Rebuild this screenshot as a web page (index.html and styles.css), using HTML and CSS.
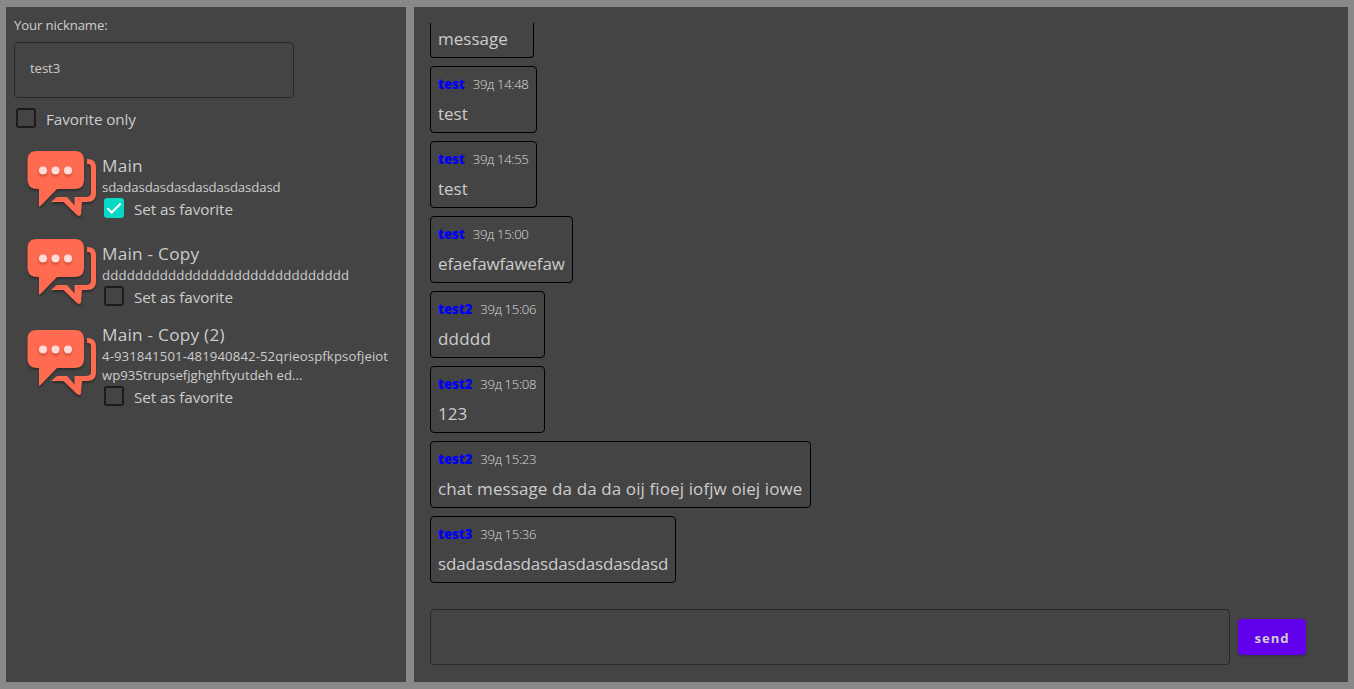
FILE: index.html
```html
<!DOCTYPE html>
<html lang="en">
<head>
<meta charset="utf-8">
<title>Chat</title>
<link rel="stylesheet" href="styles.css">
</head>
<body>
<svg class="defs" width="0" height="0">
  <symbol id="chat" viewBox="0 0 76 72">
    <path class="coral" d="M63 9c6 0 9 3 9 9v25c0 6-3 9-9 9h-5l-1 12c0 2-2 2.500-4 1L39.500 52H27l6-5h10l7.500 8.500V47H61c4.500 0 6-1 6-5V19c0-4-.5-5-4-5z"/>
    <path class="coral" d="M13.500 1h36.500c7 0 10 3 10 10v18c0 7-3 10-10 10H33L16.500 56c-1 1-1.500 1-1.500 0V39h-1C7 39 3.500 36 3.500 29V11c0-7 3-10 10-10z"/>
    <circle class="dot" cx="19" cy="20.500" r="4"/><circle class="dot" cx="31.500" cy="20.500" r="4"/><circle class="dot" cx="44" cy="20.500" r="4"/>
  </symbol>
</svg>
<main class="app">
  <aside class="sidebar">
    <div class="label">Your nickname:</div>
    <div class="nick">test3</div>
    <div class="check top"><span class="box"></span><span class="check-text">Favorite only</span></div>
    <div class="chats">
      <section class="chat">
        <svg class="icon"><use href="#chat"/></svg>
        <div class="info">
          <div class="title">Main</div>
          <div class="desc">sdadasdasdasdasdasdasdasd</div>
          <div class="check"><span class="box on"><svg width="20" height="20" viewBox="0 0 20 20"><path d="M3.500 10.300l4.200 4.200 9-9" fill="none" stroke="#fff" stroke-width="2.100"/></svg></span><span class="check-text">Set as favorite</span></div>
        </div>
      </section>
      <section class="chat">
        <svg class="icon"><use href="#chat"/></svg>
        <div class="info">
          <div class="title">Main - Copy</div>
          <div class="desc wide">dddddddddddddddddddddddddddddd</div>
          <div class="check"><span class="box"></span><span class="check-text">Set as favorite</span></div>
        </div>
      </section>
      <section class="chat tall">
        <svg class="icon"><use href="#chat"/></svg>
        <div class="info">
          <div class="title">Main - Copy (2)</div>
          <div class="desc"><span class="num">4-931841501-481940842-52qrieospfkpsofjeiot</span><br><span class="plain">wp935trupsefjghghftyutdeh ed...</span></div>
          <div class="check"><span class="box"></span><span class="check-text">Set as favorite</span></div>
        </div>
      </section>
    </div>
  </aside>
  <section class="room">
    <div class="messages">
      <article class="msg w104 scrolled"><p>message</p></article>
      <article class="msg w107"><header><b>test</b><time>39д 14:48</time></header><p>test</p></article>
      <article class="msg w107"><header><b>test</b><time>39д 14:55</time></header><p>test</p></article>
      <article class="msg w143"><header><b>test</b><time>39д 15:00</time></header><p>efaefawfawefaw</p></article>
      <article class="msg w115"><header><b>test2</b><time>39д 15:06</time></header><p class="d5">ddddd</p></article>
      <article class="msg w115"><header><b>test2</b><time>39д 15:08</time></header><p>123</p></article>
      <article class="msg w381"><header><b>test2</b><time>39д 15:23</time></header><p>chat message da da da oij fioej iofjw oiej iowe</p></article>
      <article class="msg w246"><header><b>test3</b><time>39д 15:36</time></header><p>sdadasdasdasdasdasdasdasd</p></article>
    </div>
    <div class="composer"><div class="entry"></div><button class="send">send</button></div>
  </section>
</main>
</body>
</html>
```
FILE: styles.css
```css
* { box-sizing: border-box; }
body {
  margin: 0;
  height: 689px;
  overflow: hidden;
  background: #888;
  color: #ccc;
  font-family: "Open Sans", "Noto Sans", sans-serif;
}
.defs { display: block; }
.app { display: flex; gap: 8px; padding: 7px 6px; height: 689px; }
.sidebar { width: 400px; background: #444; padding: 8px; }
.room { flex: 1; background: #444; padding: 16px; }
.label { height: 27px; font-size: 13.200px; line-height: 20px; letter-spacing: -.13px; white-space: nowrap; }
.nick {
  width: 280px; height: 56px; padding-left: 15px;
  border: 1px solid #282828; border-radius: 4px;
  font-size: 13.200px; line-height: 51px; letter-spacing: -.1px;
}
.check { display: flex; align-items: center; gap: 10px; height: 22px; padding-left: 2px; font-size: 15.300px; letter-spacing: -.13px; white-space: nowrap; }
.check-text { line-height: 22px; padding-top: 2px; }
.top { margin-top: 9px; }
.box { width: 20px; height: 20px; border: 2px solid #1c1c1c; border-radius: 3px; flex: none; }
.box.on { border: 0; background: #03dac5; }
.box svg { display: block; }
.chats { margin-top: 10px; }
.chat { display: flex; height: 88px; padding: 11px 0 0 10px; }
.tall { padding-top: 14px; height: 104px; }
.icon { width: 76px; height: 72px; margin-right: 2px; flex: none; filter: drop-shadow(0 2px 1px rgba(0,0,0,.35)); }
.coral { fill: #ff6b50; }
.dot { fill: #ffdcd8; filter: drop-shadow(0 2px 1px rgba(120,20,0,.35)); }
.info { padding-top: 4px; white-space: nowrap; }
.tall .info { margin-top: -10px; }
.title { font-size: 17.200px; line-height: 24px; letter-spacing: .25px; }
.desc { font-size: 13.200px; line-height: 19px; letter-spacing: -.12px; }
.wide { letter-spacing: .17px; }
.num { letter-spacing: .09px; }
.plain { letter-spacing: 0; }
.messages { height: 560px; overflow: hidden; display: flex; flex-direction: column; gap: 8px; }
.msg { height: 67px; flex: none; border: 1px solid #000; border-radius: 4px; padding: 8px 7px; white-space: nowrap; }
.msg.scrolled { height: 35px; border-top: 0; border-radius: 0 0 4px 4px; padding-top: 5px; }
.msg header { display: flex; gap: 8px; height: 19px; font-size: 13.200px; line-height: 19px; }
.msg b { color: #0000f8; font-weight: 800; letter-spacing: -.1px; }
.msg time { font-weight: 300; letter-spacing: -.35px; color: #ddd; }
.msg p { margin: 9px 0 0; font-size: 17px; line-height: 22px; }
.msg.scrolled p { margin: 0; }
.msg p.d5 { letter-spacing: .2px; }
.w104 { width: 104px; }
.w107 { width: 107px; }
.w115 { width: 115px; }
.w143 { width: 143px; }
.w143 p { letter-spacing: -.15px; }
.w246 { width: 246px; }
.w246 p { letter-spacing: -.15px; }
.w381 { width: 381px; }
.w381 p { letter-spacing: .11px; }
.composer { display: flex; align-items: center; gap: 8px; margin-top: 26px; }
.entry { width: 800px; height: 56px; border: 1px solid #282828; border-radius: 4px; }
.send {
  width: 68px; height: 36px; padding: 2px 0 0; border: 0; border-radius: 4px;
  background: #6200ee; color: #ccc; box-shadow: 0 1px 3px rgba(0,0,0,.3);
  font: 700 13.200px "Open Sans", sans-serif; letter-spacing: .9px;
}
```
